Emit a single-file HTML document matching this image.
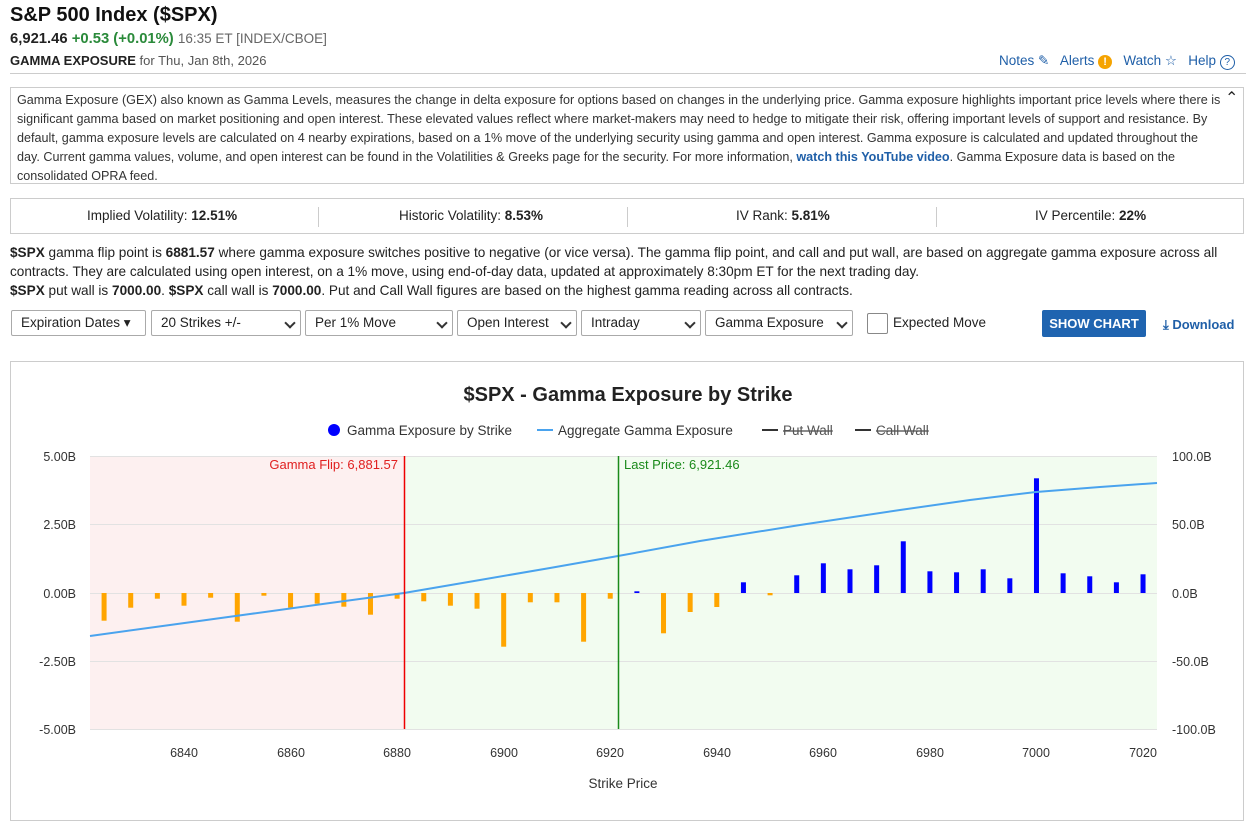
<!DOCTYPE html>
<html><head><meta charset="utf-8"><style>
body{margin:0;width:1260px;height:810px;background:#fff;font-family:"Liberation Sans",sans-serif;color:#222;position:relative;overflow:hidden}
.a{position:absolute;white-space:nowrap}
.blue{color:#1f5fa8}
.sel{position:absolute;top:310px;height:26px;border:1px solid #aaa;border-radius:2px;box-sizing:border-box;font-size:13.5px;line-height:24px;padding-left:9px;background:#fff}
.sel:after{content:"";position:absolute;right:6px;top:8px;width:6px;height:6px;border-right:2px solid #333;border-bottom:2px solid #333;transform:rotate(45deg)}
.sel.nc:after{display:none}
</style></head><body>
<div class="a" style="left:10px;top:4px;font-size:20px;font-weight:bold;color:#111">S&amp;P 500 Index ($SPX)</div>
<div class="a" style="left:10px;top:31px;font-size:14.8px"><b>6,921.46</b> <b style="color:#2a8a3a">+0.53 (+0.01%)</b> <span style="color:#666;font-size:13.5px">16:35 ET [INDEX/CBOE]</span></div>
<div class="a" style="left:10px;top:53px;font-size:13px"><b>GAMMA EXPOSURE</b> <span style="color:#555">for Thu, Jan 8th, 2026</span></div>
<div style="position:absolute;left:10px;top:73px;width:1236px;border-top:1px solid #ccc"></div>
<div class="a blue" style="left:999px;top:53px;font-size:13.5px">Notes ✎ &nbsp; Alerts <span style="display:inline-block;width:14px;height:14px;border-radius:7px;background:#f5a300;color:#fff;font-size:11px;text-align:center;line-height:14px;font-weight:bold">!</span> &nbsp; Watch ☆ &nbsp; Help <span style="display:inline-block;width:13px;height:13px;border:1.5px solid #1f5fa8;border-radius:8px;font-size:10px;text-align:center;line-height:13px">?</span></div>
<div style="position:absolute;left:10px;top:87px;width:1234px;height:97px;border:1px solid #ccc;box-sizing:border-box"></div>
<div class="a" style="left:17px;top:91px;font-size:12.6px;line-height:19px;color:#333">Gamma Exposure (GEX) also known as Gamma Levels, measures the change in delta exposure for options based on changes in the underlying price. Gamma exposure highlights important price levels where there is<br>significant gamma based on market positioning and open interest. These elevated values reflect where market-makers may need to hedge to mitigate their risk, offering important levels of support and resistance. By<br>default, gamma exposure levels are calculated on 4 nearby expirations, based on a 1% move of the underlying security using gamma and open interest. Gamma exposure is calculated and updated throughout the<br>day. Current gamma values, volume, and open interest can be found in the Volatilities &amp; Greeks page for the security. For more information, <b class="blue">watch this YouTube video</b>. Gamma Exposure data is based on the<br>consolidated OPRA feed.</div>
<div class="a" style="left:1225px;top:88px;font-size:16px">⌃</div>
<div style="position:absolute;left:10px;top:198px;width:1234px;height:36px;border:1px solid #ccc;box-sizing:border-box"></div>
<div class="a" style="left:87px;top:208px;font-size:13.5px">Implied Volatility: <b>12.51%</b></div>
<div class="a" style="left:399px;top:208px;font-size:13.5px">Historic Volatility: <b>8.53%</b></div>
<div class="a" style="left:736px;top:208px;font-size:13.5px">IV Rank: <b>5.81%</b></div>
<div class="a" style="left:1035px;top:208px;font-size:13.5px">IV Percentile: <b>22%</b></div>
<div style="position:absolute;left:318px;top:207px;height:20px;border-left:1px solid #ccc"></div>
<div style="position:absolute;left:627px;top:207px;height:20px;border-left:1px solid #ccc"></div>
<div style="position:absolute;left:936px;top:207px;height:20px;border-left:1px solid #ccc"></div>
<div class="a" style="left:10px;top:243px;font-size:13.6px;line-height:19px"><b>$SPX</b> gamma flip point is <b>6881.57</b> where gamma exposure switches positive to negative (or vice versa). The gamma flip point, and call and put wall, are based on aggregate gamma exposure across all<br>contracts. They are calculated using open interest, on a 1% move, using end-of-day data, updated at approximately 8:30pm ET for the next trading day.<br><b>$SPX</b> put wall is <b>7000.00</b>. <b>$SPX</b> call wall is <b>7000.00</b>. Put and Call Wall figures are based on the highest gamma reading across all contracts.</div>
<div class="sel nc" style="left:11px;width:135px">Expiration Dates ▾</div>
<div class="sel" style="left:151px;width:150px">20 Strikes +/-</div>
<div class="sel" style="left:305px;width:148px">Per 1% Move</div>
<div class="sel" style="left:457px;width:120px">Open Interest</div>
<div class="sel" style="left:581px;width:120px">Intraday</div>
<div class="sel" style="left:705px;width:148px">Gamma Exposure</div>
<div style="position:absolute;left:867px;top:313px;width:19px;height:19px;border:1px solid #888;border-radius:2px"></div>
<div class="a" style="left:893px;top:315px;font-size:13.5px">Expected Move</div>
<div class="a" style="left:1042px;top:310px;width:104px;height:27px;background:#1f64b0;color:#fff;font-size:13px;font-weight:bold;text-align:center;line-height:27px;border-radius:2px">SHOW CHART</div>
<div class="a blue" style="left:1163px;top:317px;font-size:13px;font-weight:bold">⤓ Download</div>
<div style="position:absolute;left:10px;top:361px;width:1234px;height:460px;border:1px solid #ccc;box-sizing:border-box"></div>
<svg style="position:absolute;left:0;top:0" width="1260" height="810" font-family="Liberation Sans,sans-serif">
<text x="628" y="401" font-size="20" font-weight="bold" text-anchor="middle" fill="#222">$SPX - Gamma Exposure by Strike</text>
<circle cx="334" cy="430" r="6" fill="#0000ff"/><text x="347" y="435" font-size="13.5" fill="#333">Gamma Exposure by Strike</text>
<line x1="537" y1="430" x2="553" y2="430" stroke="#4aa3ee" stroke-width="2"/><text x="558" y="435" font-size="13.5" fill="#333">Aggregate Gamma Exposure</text>
<line x1="762" y1="430" x2="778" y2="430" stroke="#333" stroke-width="2"/><text x="783" y="435" font-size="13.5" fill="#555" text-decoration="line-through">Put Wall</text>
<line x1="855" y1="430" x2="871" y2="430" stroke="#333" stroke-width="2"/><text x="876" y="435" font-size="13.5" fill="#555" text-decoration="line-through">Call Wall</text>
<rect x="90" y="456" width="314" height="273" fill="#fdf0f0"/>
<rect x="404" y="456" width="753" height="273" fill="#f2fcf0"/>
<g stroke="#e2e2e2"><line x1="90" y1="456.5" x2="1157" y2="456.5"/><line x1="90" y1="524.5" x2="1157" y2="524.5"/><line x1="90" y1="593.5" x2="1157" y2="593.5"/><line x1="90" y1="661.5" x2="1157" y2="661.5"/><line x1="90" y1="729.5" x2="1157" y2="729.5"/></g>
<g font-size="12.5" fill="#333" text-anchor="end"><text x="76" y="461">5.00B</text><text x="76" y="529">2.50B</text><text x="76" y="598">0.00B</text><text x="76" y="666">-2.50B</text><text x="76" y="734">-5.00B</text></g>
<g font-size="12.5" fill="#333"><text x="1172" y="461">100.0B</text><text x="1172" y="529">50.0B</text><text x="1172" y="598">0.0B</text><text x="1172" y="666">-50.0B</text><text x="1172" y="734">-100.0B</text></g>
<g font-size="12.5" fill="#333" text-anchor="middle"><text x="184" y="757">6840</text><text x="291" y="757">6860</text><text x="397" y="757">6880</text><text x="504" y="757">6900</text><text x="610" y="757">6920</text><text x="717" y="757">6940</text><text x="823" y="757">6960</text><text x="930" y="757">6980</text><text x="1036" y="757">7000</text><text x="1143" y="757">7020</text><text x="623" y="788" font-size="13.5">Strike Price</text></g>
<g id="bars"></g>
<polyline fill="none" stroke="#4aa3ee" stroke-width="2" points="90,636 170,625 250,614 330,603 404,593 480,580 550,568 618,556 700,541 800,525 900,510 970,500 1036,492 1100,487 1157,483"/>
<line x1="404.5" y1="456" x2="404.5" y2="729" stroke="#e00" stroke-width="1.5"/>
<line x1="618.5" y1="456" x2="618.5" y2="729" stroke="#1a8a1a" stroke-width="1.5"/>
<text x="398" y="469" font-size="13" fill="#e02020" text-anchor="end">Gamma Flip: 6,881.57</text>
<text x="624" y="469" font-size="13" fill="#1a8a1a">Last Price: 6,921.46</text>
</svg>
<script>
var v=[-27.7,-14.7,-5.7,-12.7,-4.7,-28.7,-2.7,-14.7,-10.7,-13.7,-21.7,-5.7,-8.3,-12.7,-15.7,-53.7,-9.3,-9.3,-48.7,-5.7,1.7,-40.3,-19,-14,10.7,-2.3,17.7,29.7,23.7,27.7,51.7,21.7,20.7,23.7,14.7,114.7,19.7,16.7,10.7,18.7];
var g=document.getElementById('bars'),s='';
for(var i=0;i<v.length;i++){var x=184+(6825+5*i-6840)*5.328-2.5,h=v[i];
s+='<rect x="'+x+'" y="'+(h>0?593-h:593)+'" width="5" height="'+Math.abs(h)+'" fill="'+(h>0?'#0000ff':'#ffa500')+'"/>';}
g.innerHTML=s;
</script>
</body></html>
